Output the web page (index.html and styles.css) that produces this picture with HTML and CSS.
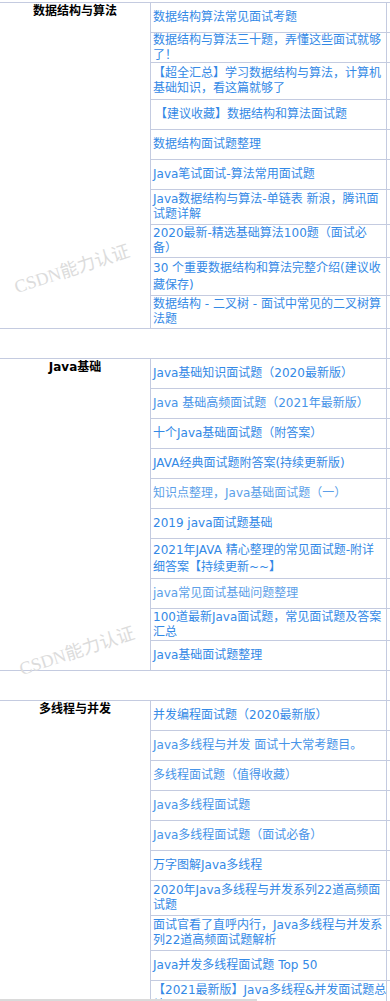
FILE: index.html
```html
<!DOCTYPE html>
<html lang="zh-CN">
<head>
<meta charset="utf-8">
<title>面试题汇总</title>
<link rel="stylesheet" href="styles.css">
</head>
<body>
<div class="table">
  <div class="section">
    <div class="cat">数据结构与算法</div>
    <div class="rows">
      <div class="row"><div class="cell"><a class="link" href="#">数据结构算法常见面试考题</a></div><div class="extra"></div></div>
      <div class="row"><div class="cell"><a class="link" href="#">数据结构与算法三十题，弄懂这些面试就够<br>了！</a></div><div class="extra"></div></div>
      <div class="row h37"><div class="cell"><a class="link" href="#">【超全汇总】学习数据结构与算法，计算机<br>基础知识，看这篇就够了</a></div><div class="extra"></div></div>
      <div class="row"><div class="cell indent"><a class="link" href="#">【建议收藏】数据结构和算法面试题</a></div><div class="extra"></div></div>
      <div class="row"><div class="cell"><a class="link" href="#">数据结构面试题整理</a></div><div class="extra"></div></div>
      <div class="row"><div class="cell"><a class="link" href="#">Java笔试面试-算法常用面试题</a></div><div class="extra"></div></div>
      <div class="row h35"><div class="cell"><a class="link" href="#">Java数据结构与算法-单链表 新浪，腾讯面<br>试题详解</a></div><div class="extra"></div></div>
      <div class="row h33"><div class="cell"><a class="link" href="#">2020最新-精选基础算法100题（面试必<br>备）</a></div><div class="extra"></div></div>
      <div class="row h38 loose"><div class="cell"><a class="link" href="#">30 个重要数据结构和算法完整介绍(建议收<br>藏保存)</a></div><div class="extra"></div></div>
      <div class="row h33"><div class="cell"><a class="link" href="#">数据结构 - 二叉树 - 面试中常见的二叉树算<br>法题</a></div><div class="extra"></div></div>
    </div>
  </div>
  <div class="row blank"><div class="fill"></div><div class="extra"></div></div>

  <div class="section">
    <div class="cat">Java基础</div>
    <div class="rows">
      <div class="row"><div class="cell"><a class="link" href="#">Java基础知识面试题（2020最新版）</a></div><div class="extra"></div></div>
      <div class="row"><div class="cell"><a class="link soft" href="#">Java 基础高频面试题（2021年最新版）</a></div><div class="extra"></div></div>
      <div class="row"><div class="cell"><a class="link" href="#">十个Java基础面试题（附答案）</a></div><div class="extra"></div></div>
      <div class="row"><div class="cell"><a class="link" href="#">JAVA经典面试题附答案(持续更新版)</a></div><div class="extra"></div></div>
      <div class="row"><div class="cell"><a class="link light" href="#">知识点整理，Java基础面试题（一）</a></div><div class="extra"></div></div>
      <div class="row"><div class="cell"><a class="link" href="#">2019 java面试题基础</a></div><div class="extra"></div></div>
      <div class="row h40 loose"><div class="cell"><a class="link" href="#">2021年JAVA 精心整理的常见面试题-附详<br>细答案【持续更新~~】</a></div><div class="extra"></div></div>
      <div class="row"><div class="cell"><a class="link light" href="#">java常见面试基础问题整理</a></div><div class="extra"></div></div>
      <div class="row h32"><div class="cell"><a class="link" href="#">100道最新Java面试题，常见面试题及答案<br>汇总</a></div><div class="extra"></div></div>
      <div class="row"><div class="cell"><a class="link" href="#">Java基础面试题整理</a></div><div class="extra"></div></div>
    </div>
  </div>
  <div class="row blank"><div class="fill"></div><div class="extra"></div></div>

  <div class="section">
    <div class="cat">多线程与并发</div>
    <div class="rows">
      <div class="row"><div class="cell"><a class="link" href="#">并发编程面试题（2020最新版）</a></div><div class="extra"></div></div>
      <div class="row"><div class="cell"><a class="link soft" href="#">Java多线程与并发 面试十大常考题目。</a></div><div class="extra"></div></div>
      <div class="row"><div class="cell"><a class="link soft" href="#">多线程面试题（值得收藏）</a></div><div class="extra"></div></div>
      <div class="row"><div class="cell"><a class="link soft" href="#">Java多线程面试题</a></div><div class="extra"></div></div>
      <div class="row"><div class="cell"><a class="link soft" href="#">Java多线程面试题（面试必备）</a></div><div class="extra"></div></div>
      <div class="row"><div class="cell"><a class="link" href="#">万字图解Java多线程</a></div><div class="extra"></div></div>
      <div class="row h35"><div class="cell"><a class="link" href="#">2020年Java多线程与并发系列22道高频面<br>试题</a></div><div class="extra"></div></div>
      <div class="row h35"><div class="cell"><a class="link" href="#">面试官看了直呼内行，Java多线程与并发系<br>列22道高频面试题解析</a></div><div class="extra"></div></div>
      <div class="row"><div class="cell"><a class="link" href="#">Java并发多线程面试题 Top 50</a></div><div class="extra"></div></div>
      <div class="row h34"><div class="cell"><a class="link" href="#">【2021最新版】Java多线程&amp;并发面试题总<br>结</a></div><div class="extra"></div></div>
    </div>
  </div>

  <span class="watermark wm1">CSDN能力认证</span>
  <span class="watermark wm2">CSDN能力认证</span>
  <span class="watermark wm3">CSDN能力认证</span>
</div>
<div class="scrollbar"></div>
</body>
</html>
```

FILE: styles.css
```css
html, body {
  margin: 0;
  padding: 0;
  background: #ffffff;
  overflow: hidden;
}

body {
  font-family: "DejaVu Sans", "Noto Sans CJK SC", sans-serif;
  font-size: 12px;
  line-height: 15px;
  color: #000000;
}

.table {
  position: relative;
  margin-top: 2px;
  border-top: 1px solid #c4cbe0;
  width: 390px;
}

.section {
  display: flex;
  border-bottom: 1px solid #c4cbe0;
}

.cat {
  width: 151px;
  flex: none;
  box-sizing: border-box;
  border-right: 1px solid #c4cbe0;
  padding-top: 1px;
  text-align: center;
  font-weight: bold;
  color: #000000;
}

.rows {
  flex: 1;
  display: flex;
  flex-direction: column;
}

.row {
  display: flex;
  height: 30px;
  box-sizing: border-box;
  border-bottom: 1px solid #c4cbe0;
}

.rows .row:last-child {
  border-bottom: none;
  height: 29px;
}

.rows .row.h34:last-child { height: 34px; }
.rows .row.h33:last-child { height: 32px; }

.row.h32 { height: 32px; }
.row.h33 { height: 33px; }
.row.h34 { height: 34px; }
.row.h35 { height: 35px; }
.row.h37 { height: 37px; }
.row.h38 { height: 38px; }
.row.h40 { height: 40px; }

.cell {
  width: 235px;
  flex: none;
  box-sizing: border-box;
  padding: 0 0 0 2px;
  display: flex;
  align-items: center;
  overflow: hidden;
  white-space: nowrap;
}

.cell.indent {
  padding-left: 4px;
}

.loose .cell {
  line-height: 17px;
}

.extra {
  flex: 1;
  border-left: 1px solid #c4cbe0;
}

.link {
  color: #3389e6;
  text-decoration: none;
}

.link.soft {
  color: #4794e8;
}

.link.light {
  color: #5c9fe8;
}

.blank .fill {
  width: 386px;
  flex: none;
}

.watermark {
  position: absolute;
  font-family: "Liberation Serif", "Noto Sans CJK SC", serif;
  font-size: 18px;
  line-height: 20px;
  color: #dcdcdc;
  white-space: nowrap;
  transform: translate(-50%, -50%) rotate(-18deg);
  pointer-events: none;
}

.wm1 { left: 72px; top: 266px; }
.wm2 { left: 77px; top: 648px; }
.wm3 { left: 77px; top: 1024px; }

.scrollbar {
  position: fixed;
  left: 0;
  bottom: 0;
  width: 257px;
  height: 2px;
  background: #dadada;
}
```
